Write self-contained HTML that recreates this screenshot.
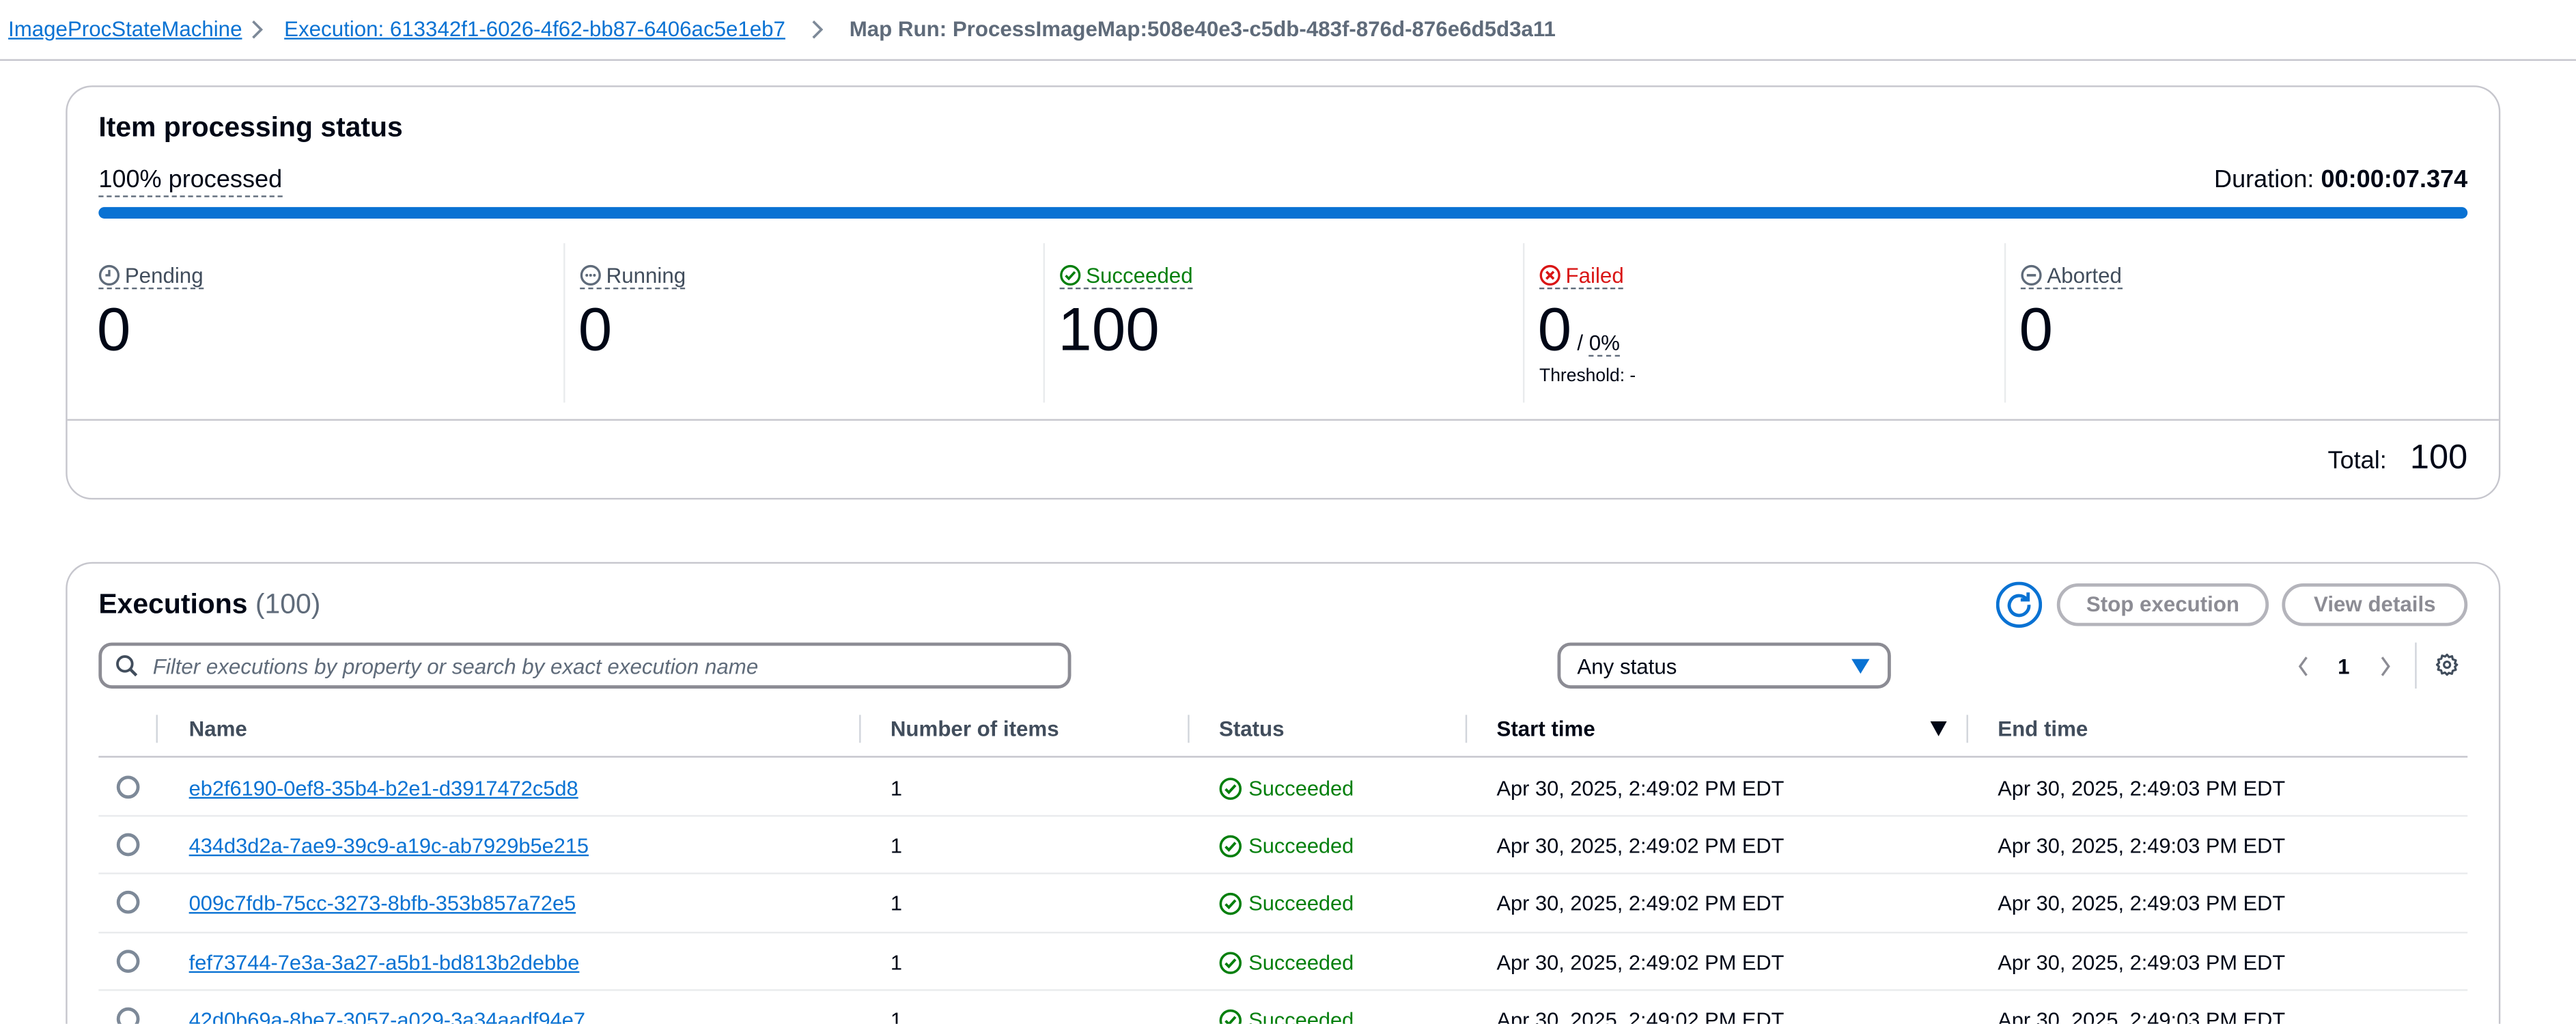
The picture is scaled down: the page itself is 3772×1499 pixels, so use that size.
<!DOCTYPE html>
<html><head><meta charset="utf-8"><style>
*{box-sizing:border-box;margin:0;padding:0}
html,body{width:3772px;height:1498px;overflow:hidden;background:#fff}
#w{position:absolute;left:0;top:0;width:1568px;height:623px;overflow:hidden;transform:scale(2.4056);transform-origin:0 0;font-family:"Liberation Sans",sans-serif;color:#000716}
.a{position:absolute;white-space:nowrap}
.lnk{color:#0972d3;text-decoration:underline}
.card{position:absolute;border:1px solid #c6c6cd;border-radius:16px;background:#fff}
.dot{border-bottom:1px dashed #5f6b7a}
.lbl{font-size:13px;color:#414d5c;display:flex;align-items:center;gap:3px}
.num{font-size:37px;font-weight:300;color:#000716}
.vd{position:absolute;width:1px;background:#e9ebed;top:148px;height:97px}
.btn{position:absolute;border:2px solid #b4b4bb;border-radius:20px;color:#8c8c94;font-weight:bold;font-size:13px;text-align:center;line-height:22px;height:26px}
.th{position:absolute;top:436px;font-size:13px;font-weight:bold;color:#414d5c}
.cd{position:absolute;top:435px;height:17px;width:1px;background:#d1d5db}
.row{position:absolute;left:60px;width:1442px;height:1px;background:#e9ebed}
.c{position:absolute;font-size:12.8px}
.rad{position:absolute;left:71px;width:14px;height:14px;border:2px solid #7d8998;border-radius:50%}
.ok{color:#037f0c;display:flex;align-items:center;gap:4px}
svg{display:block}
</style></head><body><div id="w">
<div class="a lnk" style="left:5px;top:10px;font-size:13px">ImageProcStateMachine</div>
<svg class="a" style="left:152px;top:12px" width="8" height="12" viewBox="0 0 8 12"><path d="M2 1l5 5-5 5" fill="none" stroke="#7d8998" stroke-width="1.5"/></svg>
<div class="a lnk" style="left:173px;top:10px;font-size:13px">Execution: 613342f1-6026-4f62-bb87-6406ac5e1eb7</div>
<svg class="a" style="left:493px;top:12px" width="8" height="12" viewBox="0 0 8 12"><path d="M2 1l5 5-5 5" fill="none" stroke="#7d8998" stroke-width="1.5"/></svg>
<div class="a" style="left:517px;top:10px;font-size:13px;font-weight:bold;color:#5f6b7a">Map Run: ProcessImageMap:508e40e3-c5db-483f-876d-876e6d5d3a11</div>
<div class="a" style="left:0;top:36px;width:1568px;height:1px;background:#c6c6cd"></div>

<div class="card" style="left:40px;top:52px;width:1482px;height:252px"></div>
<div class="a" style="left:60px;top:68px;font-size:17px;font-weight:bold">Item processing status</div>
<div class="a dot" style="left:60px;top:101px;font-size:15px;padding-bottom:1px">100% processed</div>
<div class="a" style="right:66px;top:101px;font-size:15px">Duration: <b>00:00:07.374</b></div>
<div class="a" style="left:60px;top:126px;width:1442px;height:7px;border-radius:4px;background:#0972d3"></div>
<div class="vd" style="left:343px"></div><div class="vd" style="left:635px"></div><div class="vd" style="left:927px"></div><div class="vd" style="left:1220px"></div>
<div class="a lbl dot" style="left:60px;top:160px"><svg width="13" height="13" viewBox="0 0 14 14"><circle cx="7" cy="7" r="6" fill="none" stroke="#5f6b7a" stroke-width="1.5"/><path d="M7 3.5V7H4.5" fill="none" stroke="#5f6b7a" stroke-width="1.5"/></svg>Pending</div>
<div class="a lbl dot" style="left:353px;top:160px"><svg width="13" height="13" viewBox="0 0 14 14"><circle cx="7" cy="7" r="6" fill="none" stroke="#5f6b7a" stroke-width="1.5"/><circle cx="4.5" cy="7" r=".9" fill="#5f6b7a"/><circle cx="7" cy="7" r=".9" fill="#5f6b7a"/><circle cx="9.5" cy="7" r=".9" fill="#5f6b7a"/></svg>Running</div>
<div class="a lbl dot" style="left:645px;top:160px;color:#037f0c"><svg width="13" height="13" viewBox="0 0 14 14"><circle cx="7" cy="7" r="6" fill="none" stroke="#037f0c" stroke-width="1.5"/><path d="M4 7.2l2 2 4-4.4" fill="none" stroke="#037f0c" stroke-width="1.6"/></svg>Succeeded</div>
<div class="a lbl dot" style="left:937px;top:160px;color:#d91515"><svg width="13" height="13" viewBox="0 0 14 14"><circle cx="7" cy="7" r="6" fill="none" stroke="#d91515" stroke-width="1.5"/><path d="M4.6 4.6l4.8 4.8M9.4 4.6L4.6 9.4" stroke="#d91515" stroke-width="1.6"/></svg>Failed</div>
<div class="a lbl dot" style="left:1230px;top:160px"><svg width="13" height="13" viewBox="0 0 14 14"><circle cx="7" cy="7" r="6" fill="none" stroke="#5f6b7a" stroke-width="1.5"/><path d="M4 7h6" stroke="#5f6b7a" stroke-width="1.6"/></svg>Aborted</div>
<div class="a num" style="left:59px;top:180px">0</div>
<div class="a num" style="left:352px;top:180px">0</div>
<div class="a num" style="left:644px;top:180px">100</div>
<div class="a num" style="left:936px;top:180px">0</div>
<div class="a" style="left:960px;top:201px;font-size:13px">/ <span class="dot">0%</span></div>
<div class="a" style="left:937px;top:223px;font-size:11px">Threshold: -</div>
<div class="a num" style="left:1229px;top:180px">0</div>
<div class="a" style="left:41px;top:255px;width:1480px;height:1px;background:#c6c6cd"></div>
<div class="a" style="right:66px;top:267px;font-size:15px">Total: <span style="font-size:21px;margin-left:10px">100</span></div>

<div class="card" style="left:40px;top:342px;width:1482px;height:400px"></div>
<div class="a" style="left:60px;top:358px;font-size:17px;font-weight:bold">Executions <span style="font-weight:normal;color:#5f6b7a">(100)</span></div>
<svg class="a" style="left:1215px;top:354px" width="28" height="28" viewBox="0 0 28 28"><circle cx="14" cy="14" r="13" fill="none" stroke="#0972d3" stroke-width="2"/><path d="M18.5 10.5A6 6 0 1 0 20 14" fill="none" stroke="#0972d3" stroke-width="2"/><path d="M19.5 6.5v4.5H15" fill="none" stroke="#0972d3" stroke-width="2"/></svg>
<div class="btn" style="left:1252px;top:355px;width:129px">Stop execution</div>
<div class="btn" style="left:1389px;top:355px;width:113px">View details</div>
<div class="a" style="left:60px;top:391px;width:592px;height:28px;border:2px solid #8c8c94;border-radius:8px"></div>
<svg class="a" style="left:70px;top:398px" width="14" height="14" viewBox="0 0 14 14"><circle cx="6" cy="6" r="4.5" fill="none" stroke="#414d5c" stroke-width="1.6"/><path d="M9.3 9.3L13 13" stroke="#414d5c" stroke-width="1.8"/></svg>
<div class="a" style="left:93px;top:398px;font-size:13px;font-style:italic;color:#5f6b7a">Filter executions by property or search by exact execution name</div>
<div class="a" style="left:948px;top:391px;width:203px;height:28px;border:2px solid #8c8c94;border-radius:8px"></div>
<div class="a" style="left:960px;top:398px;font-size:13px">Any status</div>
<svg class="a" style="left:1127px;top:401px" width="11" height="9" viewBox="0 0 11 9"><path d="M0 0h11L5.5 9z" fill="#0972d3"/></svg>
<svg class="a" style="left:1398px;top:399px" width="8" height="13" viewBox="0 0 8 13"><path d="M6 1L2 6.5 6 12" fill="none" stroke="#8c8c94" stroke-width="1.4"/></svg>
<div class="a" style="left:1423px;top:398px;font-size:13px;font-weight:bold">1</div>
<svg class="a" style="left:1448px;top:399px" width="8" height="13" viewBox="0 0 8 13"><path d="M2 1l4 5.5L2 12" fill="none" stroke="#8c8c94" stroke-width="1.4"/></svg>
<div class="a" style="left:1470px;top:391px;width:1px;height:28px;background:#d1d5db"></div>
<svg class="a" style="left:1482px;top:397px" width="15" height="15" viewBox="0 0 16 16"><path d="M8 1.5l1.3 1.6 2-.6.4 2 2 .7-.6 2L14.5 8l-1.4 1.3.6 2-2 .6-.5 2-2-.6L8 14.5l-1.3-1.4-2 .6-.5-2-2-.5.6-2L1.5 8l1.4-1.3-.6-2 2-.6.5-2 2 .6z" fill="none" stroke="#414d5c" stroke-width="1.4" stroke-linejoin="round"/><circle cx="8" cy="8" r="2" fill="none" stroke="#414d5c" stroke-width="1.4"/></svg>

<div class="cd" style="left:95px"></div><div class="cd" style="left:523px"></div><div class="cd" style="left:723px"></div><div class="cd" style="left:892px"></div><div class="cd" style="left:1197px"></div>
<div class="th" style="left:115px">Name</div><div class="th" style="left:542px">Number of items</div><div class="th" style="left:742px">Status</div><div class="th" style="left:911px;color:#000716">Start time</div>
<svg class="a" style="left:1175px;top:439px" width="10" height="9" viewBox="0 0 10 9"><path d="M0 0h10L5 9z" fill="#000716"/></svg>
<div class="th" style="left:1216px">End time</div>
<div class="row" style="top:460px;background:#c6c6cd"></div>

<div class="rad" style="top:472px"></div><div class="c lnk" style="left:115px;top:472px">eb2f6190-0ef8-35b4-b2e1-d3917472c5d8</div><div class="c" style="left:542px;top:472px">1</div><div class="c ok" style="left:742px;top:472px"><svg width="14" height="14" viewBox="0 0 14 14"><circle cx="7" cy="7" r="6" fill="none" stroke="#037f0c" stroke-width="1.5"/><path d="M4 7.2l2 2 4-4.4" fill="none" stroke="#037f0c" stroke-width="1.6"/></svg>Succeeded</div><div class="c" style="left:911px;top:472px">Apr 30, 2025, 2:49:02 PM EDT</div><div class="c" style="left:1216px;top:472px">Apr 30, 2025, 2:49:03 PM EDT</div>
<div class="row" style="top:496px"></div>
<div class="rad" style="top:507px"></div><div class="c lnk" style="left:115px;top:507px">434d3d2a-7ae9-39c9-a19c-ab7929b5e215</div><div class="c" style="left:542px;top:507px">1</div><div class="c ok" style="left:742px;top:507px"><svg width="14" height="14" viewBox="0 0 14 14"><circle cx="7" cy="7" r="6" fill="none" stroke="#037f0c" stroke-width="1.5"/><path d="M4 7.2l2 2 4-4.4" fill="none" stroke="#037f0c" stroke-width="1.6"/></svg>Succeeded</div><div class="c" style="left:911px;top:507px">Apr 30, 2025, 2:49:02 PM EDT</div><div class="c" style="left:1216px;top:507px">Apr 30, 2025, 2:49:03 PM EDT</div>
<div class="row" style="top:531px"></div>
<div class="rad" style="top:542px"></div><div class="c lnk" style="left:115px;top:542px">009c7fdb-75cc-3273-8bfb-353b857a72e5</div><div class="c" style="left:542px;top:542px">1</div><div class="c ok" style="left:742px;top:542px"><svg width="14" height="14" viewBox="0 0 14 14"><circle cx="7" cy="7" r="6" fill="none" stroke="#037f0c" stroke-width="1.5"/><path d="M4 7.2l2 2 4-4.4" fill="none" stroke="#037f0c" stroke-width="1.6"/></svg>Succeeded</div><div class="c" style="left:911px;top:542px">Apr 30, 2025, 2:49:02 PM EDT</div><div class="c" style="left:1216px;top:542px">Apr 30, 2025, 2:49:03 PM EDT</div>
<div class="row" style="top:567px"></div>
<div class="rad" style="top:578px"></div><div class="c lnk" style="left:115px;top:578px">fef73744-7e3a-3a27-a5b1-bd813b2debbe</div><div class="c" style="left:542px;top:578px">1</div><div class="c ok" style="left:742px;top:578px"><svg width="14" height="14" viewBox="0 0 14 14"><circle cx="7" cy="7" r="6" fill="none" stroke="#037f0c" stroke-width="1.5"/><path d="M4 7.2l2 2 4-4.4" fill="none" stroke="#037f0c" stroke-width="1.6"/></svg>Succeeded</div><div class="c" style="left:911px;top:578px">Apr 30, 2025, 2:49:02 PM EDT</div><div class="c" style="left:1216px;top:578px">Apr 30, 2025, 2:49:03 PM EDT</div>
<div class="row" style="top:602px"></div>
<div class="rad" style="top:613px"></div><div class="c lnk" style="left:115px;top:613px">42d0b69a-8be7-3057-a029-3a34aadf94e7</div><div class="c" style="left:542px;top:613px">1</div><div class="c ok" style="left:742px;top:613px"><svg width="14" height="14" viewBox="0 0 14 14"><circle cx="7" cy="7" r="6" fill="none" stroke="#037f0c" stroke-width="1.5"/><path d="M4 7.2l2 2 4-4.4" fill="none" stroke="#037f0c" stroke-width="1.6"/></svg>Succeeded</div><div class="c" style="left:911px;top:613px">Apr 30, 2025, 2:49:02 PM EDT</div><div class="c" style="left:1216px;top:613px">Apr 30, 2025, 2:49:03 PM EDT</div>
</div></body></html>
